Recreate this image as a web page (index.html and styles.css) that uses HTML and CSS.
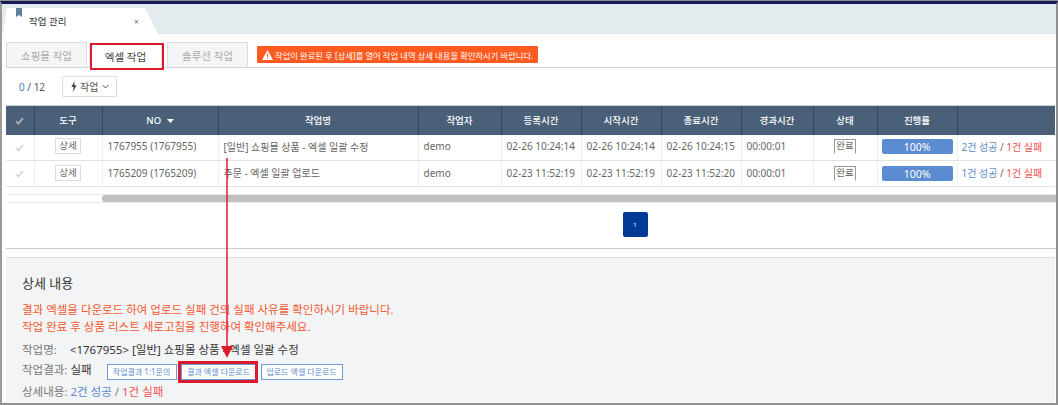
FILE: index.html
```html
<!DOCTYPE html>
<html lang="ko">
<head>
<meta charset="utf-8">
<title>작업 관리</title>
<link rel="stylesheet" href="styles.css">
</head>
<body>
<div class="frame">
  <header class="tabbar">
    <div class="pagetab">
      <svg class="bookmark" width="6" height="9" viewBox="0 0 6 9"><path d="M0 0h6v9L3 7 0 9z" fill="#5f7f9f"/></svg>
      <span class="pagetab-title">작업 관리</span>
      <span class="pagetab-close">×</span>
    </div>
  </header>
  <main class="content">
    <nav class="subtabs">
      <span class="subtab">쇼핑몰 작업</span>
      <span class="subtab subtab-active">엑셀 작업</span>
      <span class="subtab subtab-third">솔루션 작업</span>
      <span class="notice"><svg width="11" height="10" viewBox="0 0 11 10"><path d="M5.500 0 11 10H0z" fill="#fff"/><path d="M5 3.500h1V7H5zM5 7.700h1v1H5z" fill="#ff5a1f"/></svg>작업이 완료된 후 [상세]를 열어 작업 내역 상세 내용을 확인하시기 바랍니다.</span>
    </nav>
    <div class="toolbar">
      <span class="count"><b>0</b> / 12</span>
      <span class="workbtn">
        <svg width="6" height="11" viewBox="0 0 6 11"><path d="M3.600 0 .4 6h2.200L1.800 11 5.600 4.200H3.300z" fill="#444"/></svg>
        작업
        <svg width="7" height="5" viewBox="0 0 7 5"><path d="M.5 1 3.500 4 6.500 1" fill="none" stroke="#555"/></svg>
      </span>
    </div>
    <table class="grid">
      <colgroup>
        <col class="c-check"><col class="c-tool"><col class="c-no"><col class="c-name"><col class="c-user"><col class="c-time"><col class="c-time"><col class="c-time"><col class="c-elapsed"><col class="c-state"><col class="c-rate"><col class="c-result">
      </colgroup>
      <thead>
        <tr>
          <th><svg class="check" width="9" height="8" viewBox="0 0 9 8"><path d="M1 4.200 3.400 6.500 8 1.200" fill="none" stroke="#a9adb2" stroke-width="2"/></svg></th><th>도구</th><th>NO <svg class="sort" width="7" height="4" viewBox="0 0 7 4"><path d="M0 0h7L3.500 4z" fill="#fff"/></svg></th><th>작업명</th><th>작업자</th><th>등록시간</th><th>시작시간</th><th>종료시간</th><th>경과시간</th><th>상태</th><th>진행률</th><th></th>
        </tr>
      </thead>
      <tbody>
        <tr>
          <td class="center"><svg class="check" width="9" height="8" viewBox="0 0 9 8"><path d="M1 4.200 3.400 6.500 8 1.200" fill="none" stroke="#d6d6d6" stroke-width="1.800"/></svg></td><td class="center"><span class="detail">상세</span></td><td>1767955 (1767955)</td><td>[일반] 쇼핑몰 상품 - 엑셀 일괄 수정</td><td>demo</td><td>02-26 10:24:14</td><td>02-26 10:24:14</td><td>02-26 10:24:15</td><td>00:00:01</td><td class="center"><span class="state">완료</span></td><td class="center"><span class="bar">100%</span></td><td><a class="ok">2건 성공</a> / <a class="fail">1건 실패</a></td>
        </tr>
        <tr>
          <td class="center"><svg class="check" width="9" height="8" viewBox="0 0 9 8"><path d="M1 4.200 3.400 6.500 8 1.200" fill="none" stroke="#d6d6d6" stroke-width="1.800"/></svg></td><td class="center"><span class="detail">상세</span></td><td>1765209 (1765209)</td><td>주문 - 엑셀 일괄 업로드</td><td>demo</td><td>02-23 11:52:19</td><td>02-23 11:52:19</td><td>02-23 11:52:20</td><td>00:00:01</td><td class="center"><span class="state">완료</span></td><td class="center"><span class="bar">100%</span></td><td><a class="ok">1건 성공</a> / <a class="fail">1건 실패</a></td>
        </tr>
      </tbody>
    </table>
    <div class="scrolltrack"><div class="scrollthumb"></div></div>
    <div class="pager"><span class="page">1</span></div>
  </main>
  <section class="details">
    <h2 class="details-title">상세 내용</h2>
    <p class="warn">결과 엑셀을 다운로드 하여 업로드 실패 건의 실패 사유를 확인하시기 바랍니다.<br>작업 완료 후 상품 리스트 새로고침을 진행하여 확인해주세요.</p>
    <div class="line line-name"><span class="label">작업명:</span><span class="jobname">&lt;1767955&gt; [일반] 쇼핑몰 상품 - 엑셀 일괄 수정</span></div>
    <div class="line line-result"><span class="label">작업결과:</span><span class="dark">실패</span>
      <span class="minis"><span class="mini">작업결과 1:1문의</span><span class="mini">결과 엑셀 다운로드</span><span class="mini">업로드 엑셀 다운로드</span></span>
    </div>
    <div class="line line-detail"><span class="label">상세내용:</span><span><a class="ok">2건 성공</a> / <a class="fail">1건 실패</a></span></div>
  </section>
  <div class="mark mark-tab"></div>
  <div class="mark mark-btn"></div>
  <svg class="arrow" width="14" height="200" viewBox="0 0 14 200"><path d="M7 0V190" stroke="#e01b2d" stroke-width="1.500"/><path d="M1 188h12l-6 12z" fill="#e01b2d"/></svg>
</div>
</body>
</html>
```
FILE: styles.css
```css
* { box-sizing: border-box; }
html, body { margin: 0; padding: 0; height: 100%; }
body {
  font-family: "Noto Sans", "Noto Sans CJK KR", sans-serif;
  font-size: 10px;
  color: #555;
  background: #8f8f8f;
  overflow: hidden;
}
.frame {
  position: relative;
  width: 1058px;
  height: 404px;
  margin-top: 1px;
  border-top: 3px solid #141a5c;
  border-left: 2px solid #9a9a9a;
  border-right: 2px solid #8f8f8f;
  border-bottom: 2px solid #8f8f8f;
  overflow: hidden;
  background: #fff;
}
.tabbar {
  height: 30px;
  background: #e4ebef;
  border-bottom: 1px solid #dde5ec;
  padding: 4px 0 0 1px;
}
.pagetab {
  position: relative;
  width: 155px;
  height: 26px;
  background: #fff;
  clip-path: polygon(0 100%, 4px 0, 142px 0, 155px 100%);
  display: flex;
  align-items: center;
}
.bookmark { position: absolute; left: 13px; top: 0; }
.pagetab-title { margin-left: 26px; margin-top: -1px; font-size: 9.500px; color: #333; }
.pagetab-close { position: absolute; left: 131px; top: 8px; font-size: 8px; line-height: 12px; color: #666; }
.content { margin-left: 4px; border-bottom: 1px solid #ccc; height: 215px; }
.subtabs {
  display: flex;
  align-items: flex-end;
  height: 34px;
  padding-top: 8px;
  border-bottom: 1px solid #d5d5d5;
}
.subtab {
  width: 81px;
  height: 25px;
  margin-right: 2px;
  display: flex;
  align-items: center;
  justify-content: center;
  background: #f5f5f5;
  border: 1px solid #ddd;
  border-bottom: 0;
  color: #aaa;
  font-size: 10.500px;
}
.subtab-active { width: 73px; margin-right: 5px; background: #fff; color: #444; position: relative; top: 1px; }
.subtab-third { margin-right: 9px; }
.notice {
  display: flex;
  align-items: center;
  gap: 2px;
  height: 17px;
  margin-bottom: 4px;
  padding: 0 5px;
  background: #ff5a1f;
  color: #fff;
  font-size: 8.300px;
  border-radius: 1px;
}
.toolbar { display: flex; align-items: center; height: 37px; padding-left: 13px; gap: 17px; }
.count { font-size: 10px; color: #555; }
.count b { color: #4a7fc1; font-weight: 400; }
.workbtn {
  display: flex;
  align-items: center;
  gap: 3px;
  width: 55px;
  height: 21px;
  padding-left: 8px;
  border: 1px solid #ddd;
  border-radius: 1px;
  font-size: 10px;
  color: #555;
}
.grid {
  table-layout: fixed;
  border-collapse: collapse;
  width: 1049px;
  font-size: 10px;
}
.c-check { width: 28px; }
.c-tool { width: 68px; }
.c-no { width: 116px; }
.c-name { width: 200px; }
.c-user { width: 83px; }
.c-time { width: 80px; }
.c-elapsed { width: 72px; }
.c-state { width: 64px; }
.c-rate { width: 80px; }
.grid thead tr { height: 29px; }
.grid th {
  background: #4a6078;
  color: #fff;
  font-weight: 500;
  font-size: 9.500px;
  padding: 0;
  border-left: 1px solid #33465a;
  border-top: 1px solid #cfd5da;
}
.grid th:first-child { border-left: 0; }
.grid tbody tr { height: 26px; }
.grid td {
  padding: 0 0 2px 5px;
  border-left: 1px solid #eee;
  border-bottom: 1px solid #e2e2e2;
  white-space: nowrap;
  overflow: hidden;
  color: #666;
}
.grid td:first-child { border-left: 0; }
.grid td:last-child { padding-left: 4px; }
.grid td.center { padding: 0 0 2px; text-align: center; }
.check { vertical-align: middle; }
.sort { margin-left: 3px; vertical-align: middle; }
.detail {
  display: inline-block;
  width: 26px;
  height: 16px;
  line-height: 14px;
  border: 1px solid #ddd;
  font-size: 9.500px;
  color: #666;
}
.state {
  display: inline-block;
  width: 22px;
  height: 15px;
  line-height: 12px;
  border: 1px solid #999;
  border-bottom-color: transparent;
  font-size: 9.500px;
  color: #666;
}
.bar {
  display: inline-block;
  width: 71px;
  height: 15px;
  line-height: 16px;
  margin-top: 1px;
  background: #5b8bd0;
  border-radius: 2px;
  color: #fff;
  font-size: 10.500px;
}
.ok { color: #5b8bd0; }
.fail { color: #f0504f; }
.scrolltrack { margin-top: 7px; height: 9px; padding-left: 96px; border-top: 1px solid #ececec; border-bottom: 1px solid #ececec; }
.scrollthumb { height: 7px; background: #c0c0c0; border-radius: 3px 0 0 3px; }
.pager { display: flex; justify-content: center; padding: 9px 0 0 208px; }
.page {
  width: 25px;
  height: 25px;
  background: #003a94;
  color: #fff;
  border-radius: 2px;
  font-size: 6px;
  display: flex;
  align-items: center;
  justify-content: center;
}
.details {
  margin: 8px 1px 0 4px;
  height: 145px;
  background: #f3f4f6;
  border-top: 1px solid #ddd;
  padding: 16px 0 0 16px;
}
.details-title { margin: 0; font-size: 13px; line-height: 18px; font-weight: 400; color: #333; }
.warn { margin: 9px 0 0; font-size: 11.500px; line-height: 17px; color: #f4572e; }
.line { font-size: 11.500px; line-height: 18px; height: 18px; color: #777; display: flex; align-items: center; white-space: pre; }
.line-name { margin-top: 6px; }
.line-result { margin-top: 2px; }
.line-detail { margin-top: 4px; }
.label { margin-right: 3px; }
.jobname { margin-left: 10px; color: #333; }
.dark { color: #333; }
.minis { display: grid; grid-template-columns: 70px 76px 82px; gap: 4px; margin: 4px 0 0 15px; }
.mini {
  height: 16px;
  line-height: 14px;
  text-align: center;
  background: #fff;
  border: 1px solid #6d9ad8;
  font-size: 8px;
  color: #5b8bd0;
}
.mark { position: absolute; border: 2px solid #dc1c2e; pointer-events: none; }
.mark-tab { left: 88px; top: 39px; width: 74px; height: 27px; }
.mark-btn { left: 176px; top: 357px; width: 80px; height: 22px; border-width: 3px; }
.arrow { position: absolute; left: 218px; top: 154px; }
```
